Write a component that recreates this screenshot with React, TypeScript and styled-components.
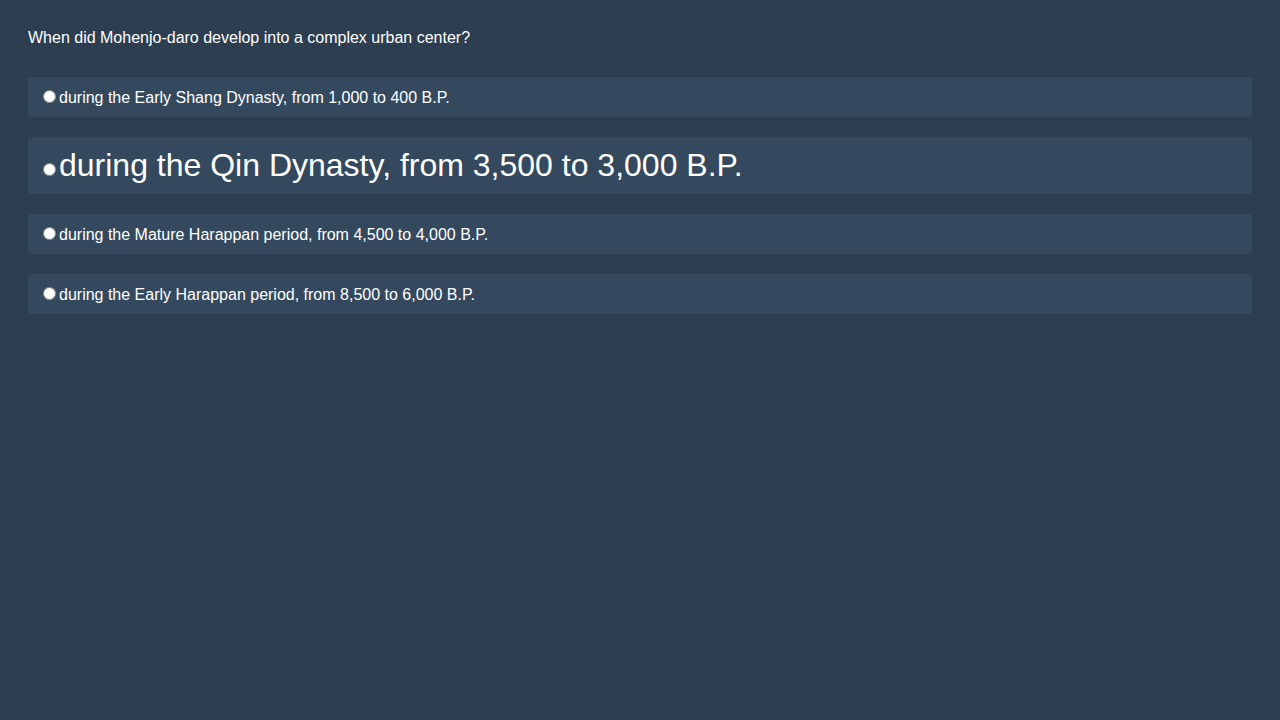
import React from "react";
import styled, { createGlobalStyle } from "styled-components";

const GlobalStyle = createGlobalStyle`
  html, body {
    margin: 0;
    padding: 0;
    background: #2c3e50;
  }
  body {
    font-family: "Liberation Sans", Arial, sans-serif;
    color: #ffffff;
  }
`;

const Page = styled.div`
  padding: 28px;
  min-height: 720px;
  box-sizing: border-box;
  background: #2c3e50;
`;

const Question = styled.div`
  font-size: 16px;
  line-height: normal;
  padding-top: 1px;
  margin-bottom: 29.6px;
`;

const Options = styled.div`
  display: flex;
  flex-direction: column;
  gap: 20px;
`;

const Option = styled.label<{ $big?: boolean }>`
  display: block;
  background: #34495e;
  border-radius: 4px;
  padding: 10px;
  font-size: ${(p) => (p.$big ? "32px" : "16px")};
  color: #ffffff;
`;

const Radio = styled.input`
  margin: 3px 3px 0 5px;
`;

const options = [
  { text: "during the Early Shang Dynasty, from 1,000 to 400 B.P.", big: false },
  { text: "during the Qin Dynasty, from 3,500 to 3,000 B.P.", big: true },
  { text: "during the Mature Harappan period, from 4,500 to 4,000 B.P.", big: false },
  { text: "during the Early Harappan period, from 8,500 to 6,000 B.P.", big: false },
];

export default function App() {
  return (
    <>
      <GlobalStyle />
      <Page>
        <Question>When did Mohenjo-daro develop into a complex urban center?</Question>
        <Options>
          {options.map((o, i) => (
            <Option key={i} $big={o.big}>
              <Radio type="radio" name="q" />
              {o.text}
            </Option>
          ))}
        </Options>
      </Page>
    </>
  );
}
